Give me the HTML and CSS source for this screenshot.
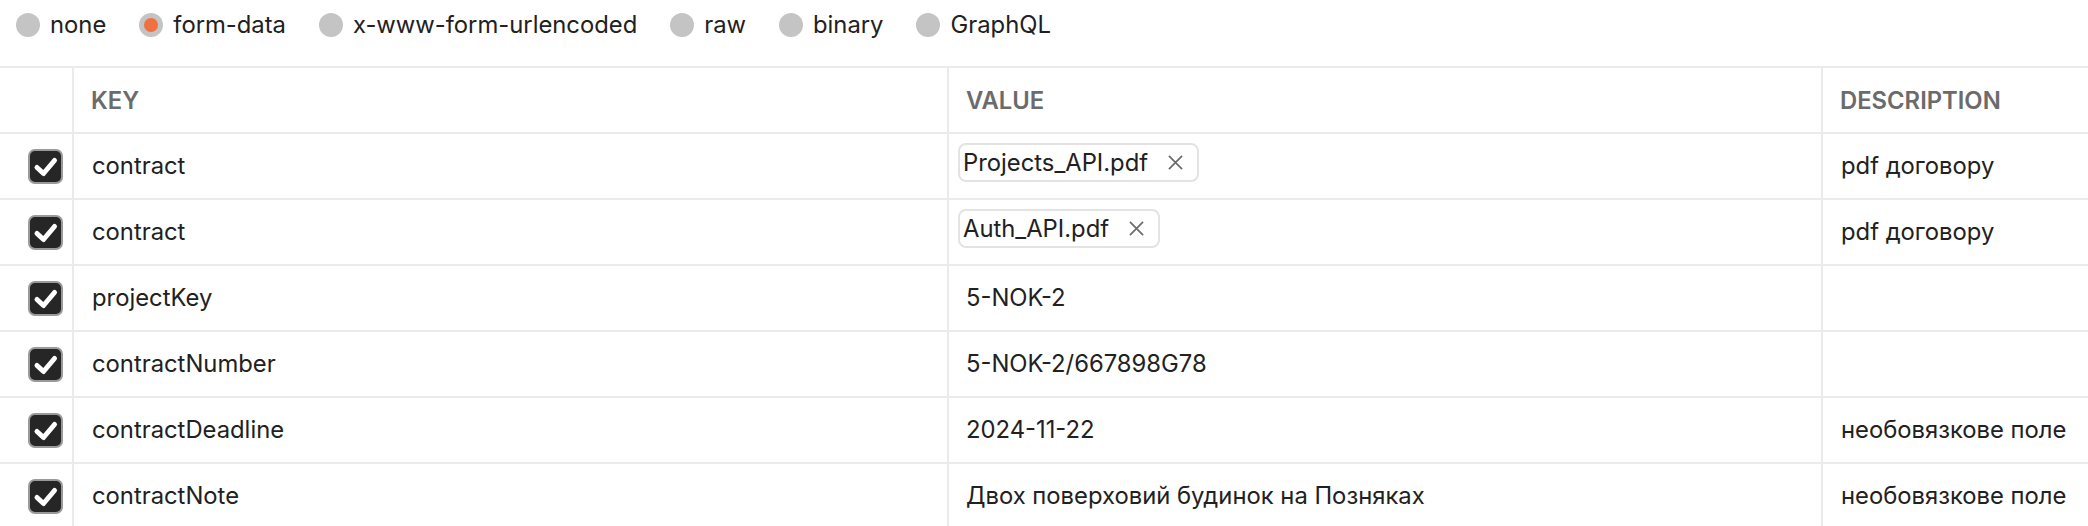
FILE: index.html
```html
<!DOCTYPE html>
<html lang="uk">
<head>
<meta charset="utf-8">
<link rel="stylesheet" href="styles.css">
</head>
<body>
<div class="body-types">
  <label class="radio"><span class="dot"></span>none</label>
  <label class="radio"><span class="dot on"></span>form-data</label>
  <label class="radio"><span class="dot"></span>x-www-form-urlencoded</label>
  <label class="radio"><span class="dot"></span>raw</label>
  <label class="radio"><span class="dot"></span>binary</label>
  <label class="radio"><span class="dot"></span>GraphQL</label>
</div>

<div class="table">
  <div class="row head">
    <div class="cell check"></div>
    <div class="cell">KEY</div>
    <div class="cell">VALUE</div>
    <div class="cell">DESCRIPTION</div>
  </div>

  <div class="row">
    <div class="cell check"><span class="box"><svg viewBox="0 0 35 35"><path d="M9 18.5 L15.5 24.5 L26.5 11.5"/></svg></span></div>
    <div class="cell">contract</div>
    <div class="cell file"><span class="chip">Projects_API.pdf<svg class="x" viewBox="0 0 16 16"><path d="M1 1 L15 15 M15 1 L1 15"/></svg></span></div>
    <div class="cell">pdf договору</div>
  </div>

  <div class="row">
    <div class="cell check"><span class="box"><svg viewBox="0 0 35 35"><path d="M9 18.5 L15.5 24.5 L26.5 11.5"/></svg></span></div>
    <div class="cell">contract</div>
    <div class="cell file"><span class="chip">Auth_API.pdf<svg class="x" viewBox="0 0 16 16"><path d="M1 1 L15 15 M15 1 L1 15"/></svg></span></div>
    <div class="cell">pdf договору</div>
  </div>

  <div class="row">
    <div class="cell check"><span class="box"><svg viewBox="0 0 35 35"><path d="M9 18.5 L15.5 24.5 L26.5 11.5"/></svg></span></div>
    <div class="cell">projectKey</div>
    <div class="cell val">5-NOK-2</div>
    <div class="cell"></div>
  </div>

  <div class="row">
    <div class="cell check"><span class="box"><svg viewBox="0 0 35 35"><path d="M9 18.5 L15.5 24.5 L26.5 11.5"/></svg></span></div>
    <div class="cell">contractNumber</div>
    <div class="cell val">5-NOK-2/667898G78</div>
    <div class="cell"></div>
  </div>

  <div class="row">
    <div class="cell check"><span class="box"><svg viewBox="0 0 35 35"><path d="M9 18.5 L15.5 24.5 L26.5 11.5"/></svg></span></div>
    <div class="cell">contractDeadline</div>
    <div class="cell val">2024-11-22</div>
    <div class="cell">необовязкове поле</div>
  </div>

  <div class="row">
    <div class="cell check"><span class="box"><svg viewBox="0 0 35 35"><path d="M9 18.5 L15.5 24.5 L26.5 11.5"/></svg></span></div>
    <div class="cell">contractNote</div>
    <div class="cell val">Двох поверховий будинок на Позняках</div>
    <div class="cell">необовязкове поле</div>
  </div>
</div>
</body>
</html>
```

FILE: styles.css
```css
html, body {
  margin: 0;
  padding: 0;
  background: #ffffff;
  overflow: hidden;
}

body {
  font-family: Inter, "Noto Sans", sans-serif;
  font-size: 23.8px;
  color: #212121;
  width: 2088px;
  height: 526px;
}

.body-types {
  height: 66px;
  box-sizing: border-box;
  padding: 13px 0 0 16px;
  display: flex;
  align-items: flex-start;
  gap: 33px;
}

.radio {
  display: flex;
  align-items: center;
  gap: 10px;
  line-height: 24px;
  height: 24px;
}

.dot {
  width: 24px;
  height: 24px;
  border-radius: 50%;
  background: #c4c4c4;
  display: flex;
  align-items: center;
  justify-content: center;
}

.dot.on::after {
  content: "";
  width: 14px;
  height: 14px;
  border-radius: 50%;
  background: #f0703f;
}

.table {
  border-top: 2px solid #ebebeb;
}

.row {
  display: grid;
  grid-template-columns: 74px 875px 874px 1fr;
  height: 66px;
  box-sizing: border-box;
  border-bottom: 2px solid #ebebeb;
}

.cell {
  box-sizing: border-box;
  border-right: 2px solid #ebebeb;
  display: flex;
  align-items: center;
  padding-left: 18px;
  padding-bottom: 2px;
  white-space: nowrap;
  overflow: hidden;
}

.cell:last-child {
  border-right: none;
}

.head .cell {
  color: #6b6b6b;
  font-weight: 600;
  padding-left: 17px;
  padding-bottom: 0;
}

.cell.check {
  padding: 0 9px 0 0;
  justify-content: flex-end;
}

.box {
  width: 35px;
  height: 35px;
  box-sizing: border-box;
  border: 2px solid #9a9a9a;
  border-radius: 7px;
  background: #262626;
  display: block;
}

.box svg {
  display: block;
  width: 35px;
  height: 35px;
  margin: -2px;
}

.box path {
  fill: none;
  stroke: #ffffff;
  stroke-width: 5;
  stroke-linecap: round;
  stroke-linejoin: round;
}

.cell.file {
  align-items: flex-start;
  padding: 9px 0 0 9px;
}

.chip {
  display: inline-flex;
  align-items: center;
  height: 39px;
  box-sizing: border-box;
  border: 2px solid #e3e3e3;
  border-radius: 8px;
  padding: 0 14px 0 3px;
  gap: 20px;
}

.chip .x {
  width: 15px;
  height: 15px;
}

.chip .x path {
  stroke: #6b6b6b;
  stroke-width: 1.8;
  fill: none;
}

.cell.val {
  padding-left: 17px;
}
```
